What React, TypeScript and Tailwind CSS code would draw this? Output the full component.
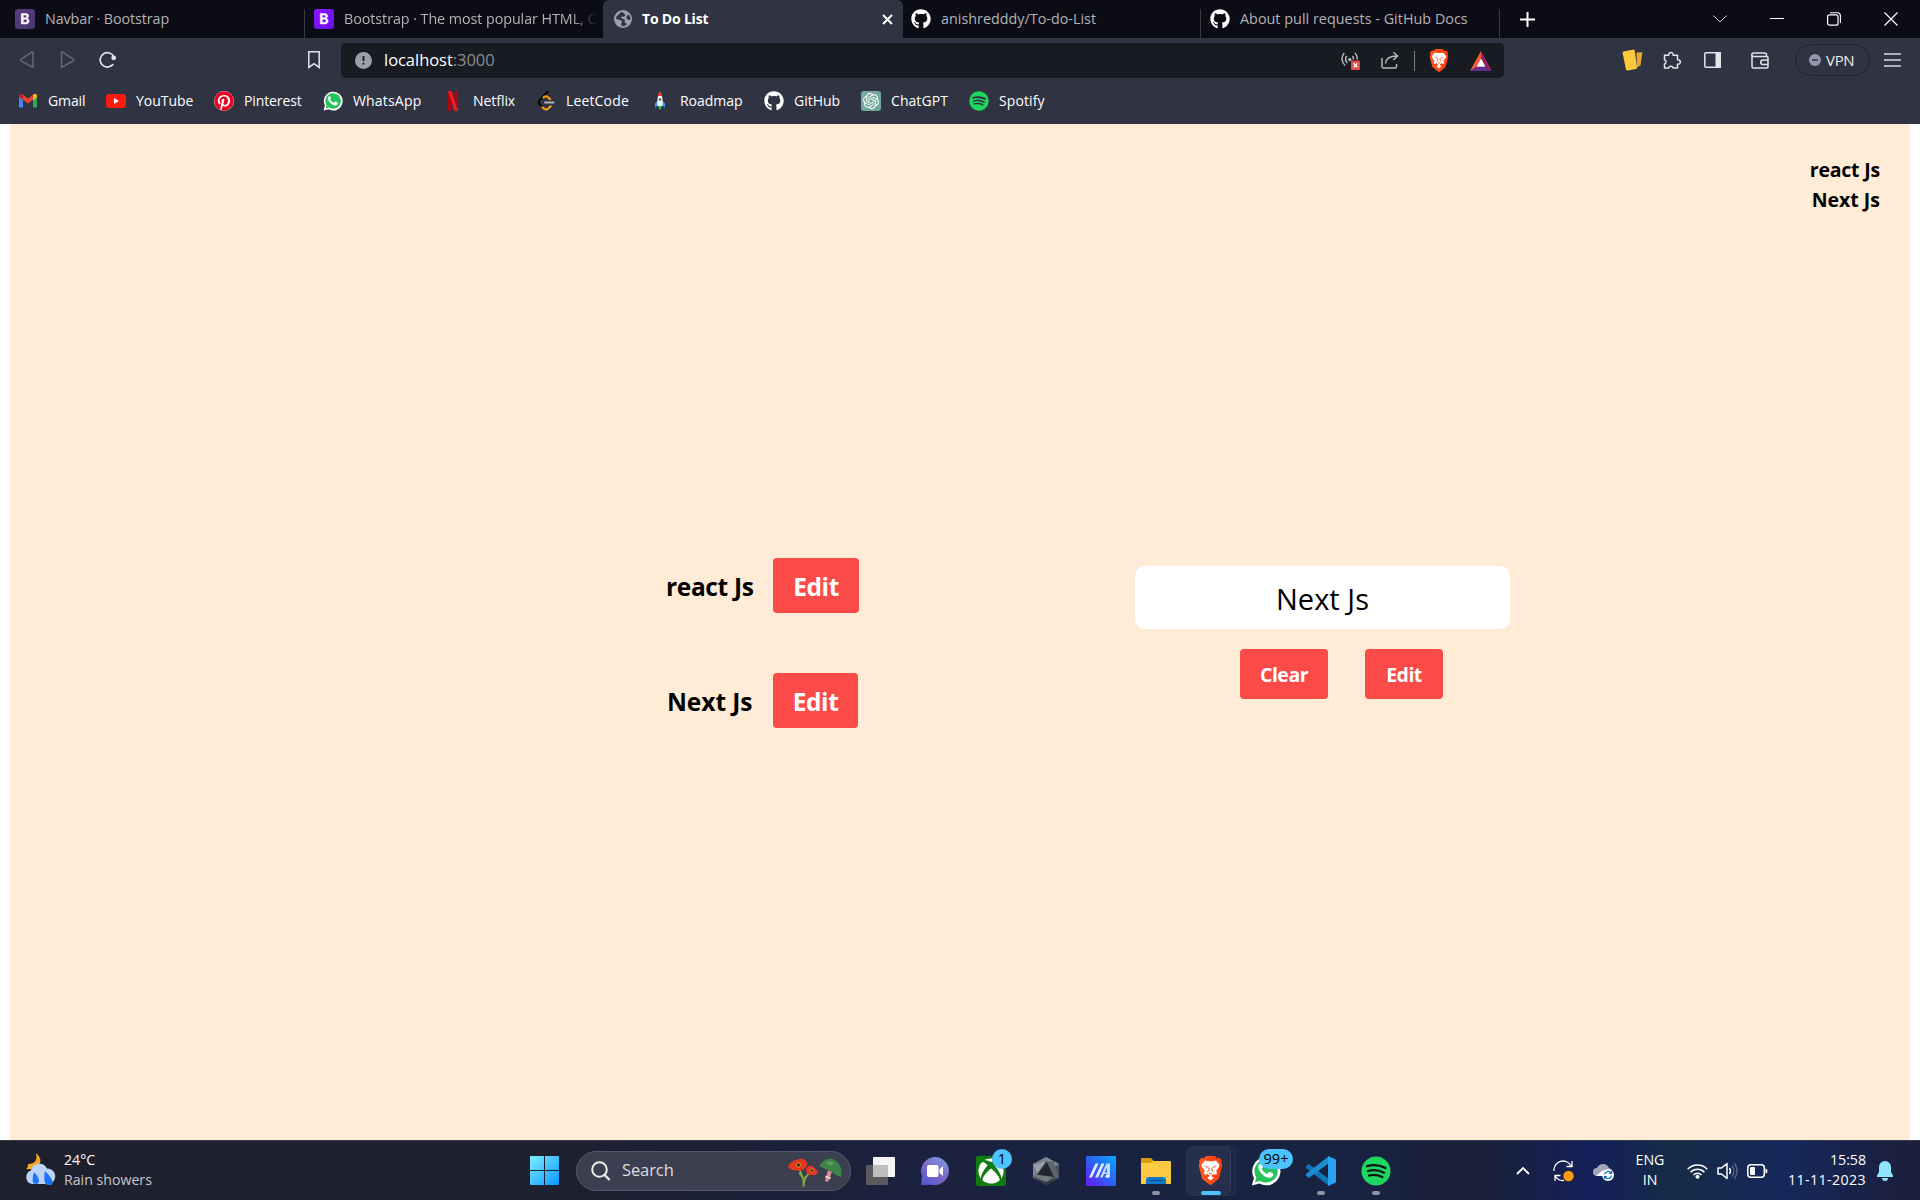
import React from 'react';
import { FaGithub, FaSpotify, FaPinterest, FaXbox } from 'react-icons/fa';
import { SiOpenai } from 'react-icons/si';

type SvgProps = { className?: string };

function Bootstrap({ from, to, id }: { from: string; to: string; id: string }) {
  return (
    <svg className="h-5 w-5 shrink-0" viewBox="0 0 20 20">
      <defs>
        <linearGradient id={id} x1="0" y1="0" x2="1" y2="1">
          <stop offset="0" stopColor={from} />
          <stop offset="1" stopColor={to} />
        </linearGradient>
      </defs>
      <rect width="20" height="20" rx="3" fill={`url(#${id})`} />
      <path d="M6.3 4.5h4.4c1.8 0 2.9 1 2.9 2.6 0 1.1-.7 2-1.7 2.3 1.3.2 2.2 1.200 2.2 2.600 0 1.900-1.300 3-3.500 3H6.300zM8.300 6.100v2.700h1.700c1.100 0 1.700-.500 1.700-1.400 0-.800-.600-1.300-1.600-1.300zM8.300 10.200v3.200h2c1.200 0 1.900-.600 1.900-1.600s-.700-1.600-2-1.600z" fill="#fff" stroke="#fff" strokeWidth=".5" fillRule="evenodd" />
    </svg>
  );
}

function Globe({ className }: SvgProps) {
  return (
    <svg className={className} viewBox="0 0 18 18">
      <circle cx="9" cy="9" r="9" fill="#9ba0ab" />
      <path d="M8 1.800 5.500 3.500 2.500 6.500 2 9l2.500.500 3 1.200.500 2-1 1.300 1 2.200c1.500.100 3.500-.500 4.800-1.600L10.500 12 11 10 8.500 8.500l-2-.500L8 6.500l2 .300L11.500 5 10 3.500zM13 5.500 12.300 8l1.700 1.800 2.200.200c.300-2-.200-4-1.200-5.200z" fill="#2f3342" />
    </svg>
  );
}

function WhatsApp({ className }: SvgProps) {
  return (
    <svg className={className} viewBox="0 0 24 24">
      <path d="M.700 23.500l1.600-6A11.300 11.300 0 1 1 6.700 22z" fill="#fff" />
      <path d="M3.200 21l1.100-4A9.300 9.300 0 1 1 7.300 19.900z" fill="#25c45a" />
      <path d="M8.600 6.700c-.300-.500-.700-.500-1-.500-.600 0-1.800.800-1.800 2.600s1.300 3.600 2.600 5.100c1.700 1.900 3.700 3.200 5.800 3.400 1.800.200 3.400-.600 3.600-2.300.100-.600.100-.900-.400-1.200l-2.200-1.100c-.400-.200-.700-.100-1 .300l-.800 1c-.300.300-.500.300-.900.100-1.700-.800-2.900-1.900-3.800-3.500-.200-.300-.100-.500.200-.9l.7-.9c.2-.3.2-.5 0-.9z" fill="#fff" />
    </svg>
  );
}

function BraveLion({ className, id }: { className: string; id: string }) {
  return (
    <svg className={`shrink-0 ${className}`} viewBox="0 0 25 29">
      <defs>
        <linearGradient id={id} x1="0" y1="0" x2="1" y2="0">
          <stop offset="0" stopColor="#ff5a1f" />
          <stop offset="1" stopColor="#ff3a0c" />
        </linearGradient>
      </defs>
      <path d="M8 0h9l2 2.200 2.500-.4L24 4.500l-.7 2 1 2.700-3 12q-.5 1.800-2 2.900L13.800 28.500q-1.300.8-2.600 0L5.700 24.100q-1.500-1.100-2-2.900l-3-12 1-2.700-.7-2L3.500 1.800l2.500.4z" fill={`url(#${id})`} />
      <path d="M7 4.600 10 5.200h5l3-.6 3.500 4.200-.6 2.500-2.700 3.400.9 2.300-.9 1.800-2.700-.7-2 1.400v.8l2.200 1.500-3.200 2.700-3.200-2.700 2.200-1.500v-.8l-2-1.400-2.700.7-.9-1.800.9-2.300-2.700-3.400-.6-2.500z" fill="#fff" />
      <path d="M6 9.800l4 .9-.6 1.300zM19 9.800l-4 .9.600 1.300z" fill="#ff4b16" />
      <path d="M10.900 11.500l.3 2.700-1.900 1.300M14.100 11.500l-.3 2.700 1.900 1.300M10.800 17l1.700.9 1.700-.9" fill="none" stroke="#ff4b16" strokeWidth="1" />
    </svg>
  );
}

function Separator() {
  return <div className="mt-[9px] h-[29px] w-px shrink-0 bg-[#3b3b42]" />;
}

function TabStrip() {
  const label = 'whitespace-nowrap text-[14.3px] leading-[38px] text-[#b3b3b6]';
  return (
    <div className="flex h-[38px] bg-[#0c0c16]">
      <div className="flex w-[304px] items-center pl-[15px]">
        <Bootstrap from="#563d7c" to="#4a3570" id="bs4" />
        <span className={`ml-[10px] ${label} tracking-[-0.08px]`}>Navbar · Bootstrap</span>
      </div>
      <Separator />
      <div className="flex w-[298px] items-center pl-[9px]">
        <Bootstrap from="#9013fe" to="#6610f2" id="bs5" />
        <div className="ml-[10px] w-[253px] overflow-hidden [mask-image:linear-gradient(to_right,black_90%,transparent)]">
          <span className={`${label} tracking-[-0.05px]`}>Bootstrap · The most popular HTML, CSS</span>
        </div>
      </div>
      <div className="flex w-[300px] items-center rounded-t-[6px] bg-[#2f3342] pl-[11px] pr-[10px]">
        <Globe className="h-[18px] w-[18px]" />
        <span className="ml-[10px] text-[14px] font-bold leading-[38px] tracking-[-0.2px] text-white">To Do List</span>
        <svg className="ml-auto h-[11px] w-[11px]" viewBox="0 0 11 11">
          <path d="M1 1l9 9M10 1l-9 9" stroke="#fff" strokeWidth="2" />
        </svg>
      </div>
      <div className="flex w-[297px] items-center pl-[8px]">
        <FaGithub className="h-5 w-5 text-white" />
        <span className={`ml-[10px] ${label} tracking-[0.03px]`}>anishredddy/To-do-List</span>
      </div>
      <Separator />
      <div className="flex w-[298px] items-center pl-[9px]">
        <FaGithub className="h-5 w-5 text-white" />
        <span className={`ml-[10px] ${label} tracking-[0.05px]`}>About pull requests - GitHub Docs</span>
      </div>
      <Separator />
      <div className="flex flex-1 items-center pl-[20px] pr-[22px]">
        <svg className="h-[15px] w-[15px]" viewBox="0 0 15 15">
          <path d="M7.500 0v15M0 7.500h15" stroke="#fff" strokeWidth="2" />
        </svg>
        <svg className="ml-auto h-[14px] w-[14px]" viewBox="0 0 14 14">
          <path d="M.500 3.500 7 10l6.500-6.500" stroke="#d0d0d3" fill="none" />
        </svg>
        <svg className="ml-[43px] h-[14px] w-[14px]" viewBox="0 0 14 14">
          <path d="M0 6.500h14" stroke="#fff" />
        </svg>
        <svg className="ml-[43px] h-[14px] w-[14px]" viewBox="0 0 14 14">
          <rect x=".6" y="2.800" width="10.400" height="10.400" rx="2" stroke="#fff" strokeWidth="1.200" fill="none" />
          <path d="M3 .700h7.500a3 3 0 0 1 2.900 3V11" stroke="#fff" strokeWidth="1.100" fill="none" />
        </svg>
        <svg className="ml-[43px] h-[14px] w-[14px]" viewBox="0 0 14 14">
          <path d="M.500.500l13 13M13.500.500l-13 13" stroke="#fff" strokeWidth="1.200" />
        </svg>
      </div>
    </div>
  );
}

function AddressRow() {
  return (
    <div className="flex h-[45px] items-center bg-[#2f3342] pb-px pl-[20px] pr-[18px]">
      <svg className="h-[18px] w-[15px]" viewBox="0 0 15 18">
        <path d="M13 1.600v14.800L1.200 9.800q-.900-.800 0-1.600L11.800 1.200q1.200-.500 1.200.600" fill="none" stroke="#666a78" strokeWidth="1.500" strokeLinejoin="round" />
      </svg>
      <svg className="ml-[25px] h-[18px] w-[15px]" viewBox="0 0 15 18">
        <path d="M1.500 1.600v14.800L13.300 9.800q.900-.800 0-1.600L2.700 1.200q-1.200-.500-1.200.600" fill="none" stroke="#666a78" strokeWidth="1.500" strokeLinejoin="round" />
      </svg>
      <svg className="ml-[24px] h-[18px] w-[18px]" viewBox="0 0 18 18">
        <path d="M13.800 13.600A7.200 7.200 0 1 1 15 6" fill="none" stroke="#e4e5e9" strokeWidth="1.700" strokeLinecap="round" />
        <circle cx="14.700" cy="6.800" r="2.400" fill="#e4e5e9" />
      </svg>
      <svg className="ml-[191px] h-[18px] w-[12px]" viewBox="0 0 12 18">
        <path d="M.800.800h10.400v15.600L6 12.600.800 16.400z" fill="none" stroke="#e4e5e9" strokeWidth="1.500" />
      </svg>
      <div className="ml-[21px] mt-px flex h-[35px] w-[1163px] items-center rounded-[5px] bg-[#191b22] pl-[14px] pr-[12px]">
        <svg className="h-[17px] w-[17px]" viewBox="0 0 17 17">
          <circle cx="8.500" cy="8.500" r="8.500" fill="#9a9fac" />
          <path d="M8.500 4v5M8.500 10.800v1.800" stroke="#191b22" strokeWidth="1.900" />
        </svg>
        <span className="ml-[12px] text-[16.500px] tracking-[-0.04px] text-white">
          localhost<span className="text-[#898c94]">:3000</span>
        </span>
        <svg className="mb-px ml-auto h-5 w-5" viewBox="0 0 20 20">
          <g fill="none" stroke="#b7b8bd" strokeWidth="1.500">
            <path d="M4.300 15.500a8.500 8.500 0 0 1-1-12.500M6.500 13a4.800 4.800 0 0 1-.700-7M14 3a8.500 8.500 0 0 1 2.300 6.500M11.500 6a4.800 4.800 0 0 1 1 3.500" />
          </g>
          <circle cx="8.800" cy="9.600" r="1.700" fill="#b7b8bd" />
          <rect x="10" y="10.500" width="9" height="9.500" rx="1" fill="#e04b43" />
          <path d="M12.600 13.200l3.800 4M16.400 13.200l-3.800 4" stroke="#fff" strokeWidth="1.400" />
        </svg>
        <svg className="mb-[2px] ml-[20px] h-[18px] w-[18px]" viewBox="0 0 18 18">
          <path d="M1 7v8.500Q1 17 2.500 17H14q1.500 0 1.500-1.500V13M4.500 12.500c.500-5 3.500-7.500 11-7.500M12.300 1.200 16.500 5l-4.200 4" fill="none" stroke="#b7b8bd" strokeWidth="1.500" />
        </svg>
        <div className="ml-[15px] h-5 w-px bg-[#7c7e84]" />
        <BraveLion className="ml-[14px] h-[23px] w-[20px]" id="brave-sm" />
        <svg className="ml-[21px] h-5 w-[22px]" viewBox="0 0 22 20">
          <path d="M11 0 0 20l6.500-4L11 7z" fill="#fb5c33" />
          <path d="M11 0l11 20-6.500-4L11 7z" fill="#9e1f63" />
          <path d="M0 20h22l-6.500-4h-9z" fill="#662d91" />
          <path d="M11 7.200 6.600 15.800h8.800z" fill="#fff" />
        </svg>
      </div>
      <svg className="ml-[118px] h-[22px] w-[21px]" viewBox="0 0 21 22">
        <path d="M14.500 3.500 20.500 3.200 18.500 16.500 15 18.500z" fill="#e5a82b" />
        <path d="M1.500 2.500 11.500.500q1 0 1.200 1L15 18.500q0 1.200-1 1.400L5.500 21.500q-1.200.100-1.500-1L.600 4q-.100-1.200.900-1.500z" fill="#ffc83d" />
      </svg>
      <svg className="ml-[20px] h-[18px] w-[18px]" viewBox="0 0 18 18">
        <path d="M1.500 4.300h4.200a2.300 2.300 0 1 1 4.500 0h4.300v4.400a2.300 2.300 0 1 1 0 4.500V17h-4.300a2.300 2.300 0 0 0-4.500 0H1.500v-4a2.300 2.300 0 0 0 0-4.300z" fill="none" stroke="#e4e5e9" strokeWidth="1.500" strokeLinejoin="round" />
      </svg>
      <svg className="ml-[23px] h-4 w-[17px]" viewBox="0 0 17 16">
        <rect x=".8" y=".8" width="15.400" height="14.400" rx="1" fill="none" stroke="#e4e5e9" strokeWidth="1.500" />
        <path d="M11.500 0H17v16h-5.500z" fill="#e4e5e9" />
      </svg>
      <svg className="ml-[30px] h-[17px] w-[18px]" viewBox="0 0 18 17">
        <path d="M15.500 4.500V2.600A1.500 1.500 0 0 0 14 1H2.500a1.600 1.600 0 0 0 0 3.500H16A1.200 1.200 0 0 1 17 5.700v9.100A1.200 1.200 0 0 1 16 16H2.500A1.500 1.500 0 0 1 1 14.500V2.500M17 8h-5a2.300 2.300 0 0 0 0 4.600h5z" fill="none" stroke="#e4e5e9" strokeWidth="1.500" />
      </svg>
      <div className="ml-[26px] flex h-[32px] w-[75px] items-center rounded-full border border-[#232633] pl-[13px]">
        <svg className="h-[12px] w-[12px] shrink-0" viewBox="0 0 12 12">
          <circle cx="6" cy="6" r="6" fill="#9297ab" />
          <path d="M3 6h6" stroke="#2f3342" strokeWidth="1.500" />
        </svg>
        <span className="ml-[5px] text-[15px] tracking-[-0.3px] text-[#ececf0]">VPN</span>
      </div>
      <svg className="ml-[14px] h-[14px] w-[17px]" viewBox="0 0 17 14">
        <path d="M0 1h17M0 7h17M0 13h17" stroke="#dcdde2" strokeWidth="1.500" />
      </svg>
    </div>
  );
}

function Bookmarks() {
  const text = 'text-[14px] text-white whitespace-nowrap tracking-[-0.02px]';
  const item = 'flex shrink-0 items-center gap-[10px]';
  return (
    <div className="flex h-[41px] items-center bg-[#2f3342] pb-[6px] pl-[18px]">
      <div className={`${item} w-[88px]`}>
        <svg className="h-[15px] w-5" viewBox="0 0 20 15">
          <path d="M1 3v10.500a1 1 0 0 0 1 1h3V6z" fill="#4285f4" />
          <path d="M15 6v8.500h3a1 1 0 0 0 1-1V3z" fill="#34a853" />
          <path d="M1 3q0-2.500 2.500-2L5 2v5L1 4z" fill="#c5221f" />
          <path d="M5 1.800 10 5.600l5-3.800v5L10 10.600 5 6.800z" fill="#ea4335" />
          <path d="M15 1.800q4-2.600 4 1.400v1L15 7.200z" fill="#fbbc04" />
        </svg>
        <span className="whitespace-nowrap text-[14px] tracking-[-0.1px] text-white">Gmail</span>
      </div>
      <div className={`${item} w-[108px]`}>
        <svg className="h-[14px] w-5" viewBox="0 0 20 14">
          <rect width="20" height="14" rx="3.500" fill="#ff1a0e" />
          <path d="M8 4v6l5-3z" fill="#fff" />
        </svg>
        <span className={text}>YouTube</span>
      </div>
      <div className={`${item} w-[109px]`}>
        <div className="grid h-5 w-5 place-items-center rounded-full bg-white">
          <FaPinterest className="h-5 w-5 text-[#e60023]" />
        </div>
        <span className="whitespace-nowrap text-[14px] tracking-[-0.12px] text-white">Pinterest</span>
      </div>
      <div className={`${item} w-[120px]`}>
        <WhatsApp className="h-5 w-5" />
        <span className="whitespace-nowrap text-[14px] tracking-[0.18px] text-white">WhatsApp</span>
      </div>
      <div className={`${item} w-[93px]`}>
        <svg className="h-5 w-5" viewBox="0 0 20 20">
          <path d="M5 0h3.500v20L5 20z" fill="#b1060f" />
          <path d="M11.500 0H15v20h-3.500z" fill="#b1060f" />
          <path d="M5 0h3.500L15 20h-3.500z" fill="#ee1c25" />
        </svg>
        <span className="whitespace-nowrap text-[14px] tracking-[-0.05px] text-white">Netflix</span>
      </div>
      <div className={`${item} w-[114px]`}>
        <svg className="h-5 w-5" viewBox="0 0 20 20" fill="none" strokeWidth="2" strokeLinecap="round">
          <path d="M11.500 1 4 8.700q-2.500 2.300 0 4.800l2.500 2.500" stroke="#080808" />
          <path d="M7.500 6.500q2-2.300 4.500-.300l2.200 2M6.500 16.200l1.600 1.500q2.200 1.600 4.200-.200l2.400-2.300" stroke="#ffa116" />
          <path d="M9 11.600h8.500" stroke="#b3b3b3" />
        </svg>
        <span className="whitespace-nowrap text-[14px] tracking-[0.15px] text-white">LeetCode</span>
      </div>
      <div className={`${item} w-[114px]`}>
        <svg className="h-5 w-5" viewBox="0 0 20 20">
          <path d="M7.500 9.500 5 12.500v4l3-2zM12.500 9.500l2.500 3v4l-3-2z" fill="#3b9df0" />
          <path d="M8 15h4l-2 4.500z" fill="#23c44a" />
          <path d="M10 1q3.500 5 2.500 14h-5Q6.500 6 10 1z" fill="#f2f2f2" />
          <path d="M10 .500q1.800 2 2.300 4.500H7.700Q8.200 2.500 10 .500z" fill="#e63a2e" />
          <circle cx="10" cy="8.500" r="1.200" fill="#556" />
        </svg>
        <span className={text}>Roadmap</span>
      </div>
      <div className={`${item} w-[97px]`}>
        <FaGithub className="h-5 w-5 text-white" />
        <span className={text}>GitHub</span>
      </div>
      <div className={`${item} w-[108px]`}>
        <div className="grid h-5 w-5 place-items-center rounded-[3px] bg-[#74aa9c]">
          <SiOpenai className="h-4 w-4 text-white" />
        </div>
        <span className="whitespace-nowrap text-[14px] tracking-[0.06px] text-white">ChatGPT</span>
      </div>
      <div className={item}>
        <FaSpotify className="h-5 w-5 text-[#1ed760]" />
        <span className="whitespace-nowrap text-[14px] tracking-[0.1px] text-white">Spotify</span>
      </div>
    </div>
  );
}

function Page() {
  const big = 'flex h-[55px] items-center justify-center rounded-[4px] bg-[#fb4b48] pt-[3px] text-[24.500px] font-bold tracking-[-0.4px] text-white';
  const small = 'flex h-[50px] items-center justify-center rounded-[4px] bg-[#fb4b48] pt-[2px] text-[19.500px] font-bold tracking-[-0.5px] text-white';
  return (
    <div className="flex h-[1016px] bg-white px-[10px] text-black">
      <div className="flex w-full bg-[#ffecd6]">
        <div className="ml-[656px] mt-[434px] flex flex-col gap-[60px]">
          <div className="flex items-center">
            <span className="w-[107px] whitespace-nowrap pt-[4px] text-[24.500px] font-bold tracking-[-0.35px]">react Js</span>
            <button className={`${big} w-[86px]`}>Edit</button>
          </div>
          <div className="flex items-center">
            <span className="w-[107px] whitespace-nowrap pl-px pt-[4px] text-[24.500px] font-bold tracking-[-0.05px]">Next Js</span>
            <button className={`${big} w-[85px]`}>Edit</button>
          </div>
        </div>
        <div className="ml-[276px] mt-[442px] flex w-[375px] flex-col">
          <div className="flex h-[63px] items-center justify-center rounded-[10px] bg-white pt-[3px] text-[29px] tracking-[0.05px]">Next Js</div>
          <div className="mt-[20px] flex pl-[105px]">
            <button className={`${small} w-[88px]`}>Clear</button>
            <button className={`${small} ml-[37px] w-[78px]`}>Edit</button>
          </div>
        </div>
        <div className="ml-auto mr-[30px] mt-[31px] text-right text-[19.500px] font-bold leading-[30px]">
          <p className="tracking-[-0.2px]">react Js</p>
          <p className="tracking-[0px]">Next Js</p>
        </div>
      </div>
    </div>
  );
}

function Weather() {
  return (
    <svg className="h-[32px] w-[32px]" viewBox="0 0 32 32">
      <path d="M12 0q7 6 3 12-4 5-13 4 2-1 2-5 6 0 8-4 1-3 0-7z" fill="#f6a822" />
      <path d="M8 31a7 7 0 0 1-1-13.500 8.500 8.500 0 0 1 16-2A7.500 7.500 0 0 1 24 31z" fill="#bcd3f8" />
      <path d="M10 19q5.500 6 5 9.500T9.500 30.500q-2-3 .5-11.500zM21 18q8 8 7.500 12T22 31.500q-3-4-1-13.500z" fill="#1a74f5" />
    </svg>
  );
}

function Indicator() {
  return <div className="absolute -bottom-[9px] left-[11px] h-1 w-2 rounded-full bg-[#9093a4]" />;
}

function Taskbar() {
  return (
    <div className="flex h-[60px] items-center border-t border-[#33384a] bg-[linear-gradient(90deg,#1e202e_0%,#1e202f_29%,#1a2240_50%,#182242_70%,#1a2137_77%,#14205a_83%,#162b46_87%,#15275a_93%,#1c1f3a_100%)] text-[14.200px] text-white">
      <div className="ml-[24px] w-8 pb-[4px]"><Weather /></div>
      <div className="ml-[8px] w-[466px] pb-[2px] leading-5 tracking-[-0.02px]">
        <p>24°C</p>
        <p className="text-[#c7c8cf]">Rain showers</p>
      </div>
      <svg className="h-[29px] w-[29px]" viewBox="0 0 29 29">
        <defs>
          <linearGradient id="win" x1="0" y1="0" x2="1" y2="1">
            <stop offset="0" stopColor="#7cf0ff" />
            <stop offset="1" stopColor="#0c95ff" />
          </linearGradient>
        </defs>
        <path d="M1 0h13v14H0V1q0-1 1-1zM15 0h13q1 0 1 1v13H15zM0 15h14v14H1q-1 0-1-1zM15 15h14v13q0 1-1 1H15z" fill="url(#win)" />
      </svg>
      <div className="ml-[17px] flex h-10 w-[275px] items-center rounded-full border border-[#55586c] bg-[#3c3f50] pl-[14px]">
        <svg className="h-5 w-[19px]" viewBox="0 0 19 20">
          <circle cx="8.500" cy="8.500" r="7.300" fill="none" stroke="#eee" strokeWidth="2" />
          <path d="M13.500 13.800 17.800 18.300" stroke="#eee" strokeWidth="2.300" strokeLinecap="round" />
        </svg>
        <span className="ml-[12px] w-[53px] text-[16.500px] tracking-[-0.1px] text-[#dcdde1]">Search</span>
        <svg className="ml-[113px] mt-[4px] h-[30px] w-[30px]" viewBox="0 0 30 30">
          <path d="M11 11q5 8 4.500 18M23 14q-7 4-7.500 15M15 21q-2-5-4-6M16 20q4-2 5-5" fill="none" stroke="#7cb342" strokeWidth="1.500" />
          <path d="M0 8Q3 3 8 2q7-3 10 1 3 4-1 7-4 5-9 2-6 1-8-4z" fill="#e4391f" />
          <path d="M18 11q2-4 6-3 3 2 6 6-2 4-6 3-6 0-6-6z" fill="#e4391f" />
          <circle cx="10.500" cy="7" r="2" fill="#3a1a10" stroke="#e3b33c" strokeWidth=".8" />
          <circle cx="24" cy="12.500" r="1.600" fill="#3a1a10" stroke="#e3b33c" strokeWidth=".6" />
        </svg>
        <svg className="ml-[1px] h-[25px] w-[23px]" viewBox="0 0 23 25">
          <path d="M9 12l4 2-4 10-3-1z" fill="#d98a98" />
          <path d="M6.500 18.500l5 2" stroke="#f7c4d0" strokeWidth="2" />
          <path d="M0 8Q7-2 16 2q8 6 6 17-2-1-3-1-9-6-19-10z" fill="#3f8548" />
          <path d="M6 5q5-3 9 0l-3 3z" fill="#5a9d5c" />
        </svg>
      </div>
      <svg className="ml-[15px] h-7 w-[29px]" viewBox="0 0 29 28">
        <rect y="8" width="22" height="20" rx="1" fill="#5a5a5e" />
        <rect x="7" width="22" height="20" rx="1" fill="#f5f5f5" />
        <path d="M7 8h15v12H7z" fill="#bebebe" />
      </svg>
      <svg className="ml-[26px] h-7 w-7" viewBox="0 0 28 28">
        <defs>
          <linearGradient id="chat" x1="0.800" y1="0" x2="0.200" y2="1">
            <stop offset="0" stopColor="#7b9be6" />
            <stop offset=".5" stopColor="#8068c4" />
            <stop offset="1" stopColor="#5558cf" />
          </linearGradient>
        </defs>
        <path d="M14 0a14 14 0 1 1-3 27.700L1 28q-1 0-.800-1L1 19A14 14 0 0 1 14 0z" fill="url(#chat)" />
        <rect x="6" y="8" width="11.500" height="12" rx="2" fill="#fff" />
        <path d="M18.500 12.500 22 9v10l-3.500-3z" fill="#fff" />
      </svg>
      <div className="relative ml-[27px] grid h-[30px] w-[30px] place-items-center rounded-[2px] bg-[#107c10]">
        <FaXbox className="h-[26px] w-[26px] text-white" />
        <div className="absolute -top-[7px] left-4 h-5 w-5 rounded-full bg-[#4cc2ff] text-center text-[14.500px] leading-5 text-black">1</div>
      </div>
      <svg className="ml-[27px] h-7 w-[26px]" viewBox="0 0 26 28">
        <path d="M13 0l13 7v14l-13 7L0 21V7z" fill="#4b525a" />
        <path d="M13 0l13 7-5 3L13 3.500z" fill="#808993" />
        <path d="M0 21V7L13 0v4L4 17z" fill="#7b848d" />
        <path d="M0 7l4.500 9L13 4 2.500 8z" fill="#98a0a9" />
        <path d="M14 5l7 15-17-2z" fill="#23272d" />
        <path d="M14 5l6.500-1L26 21l-5-1z" fill="#5c646d" />
        <path d="M3 17.500l17 2.500-7 5.500-11-5.500z" fill="#72797f" />
        <path d="M1 21l12 4 12-4-12 7z" fill="#34393f" />
      </svg>
      <svg className="ml-[27px] h-[30px] w-[30px]" viewBox="0 0 30 30">
        <defs>
          <linearGradient id="asus" x1="0" y1="1" x2="1" y2="0">
            <stop offset="0" stopColor="#6a18f5" />
            <stop offset=".5" stopColor="#2b62f5" />
            <stop offset="1" stopColor="#04aaff" />
          </linearGradient>
        </defs>
        <path d="M0 0h30v30H0z" fill="url(#asus)" />
        <path d="M3 21.500 9.500 7.500h3L6 21.500zM9 21.500 15.500 7.500h3L12 21.500z" fill="#dfe8ff" />
        <path d="M14 21.500 20.500 7.500h3.500v14h-3v-3.500h-3l-1.500 3.500zM21 11.500l-2.500 5H21z" fill="#c9dcff" fillRule="evenodd" />
        <circle cx="21" cy="20.300" r="1.500" fill="#fff" />
      </svg>
      <div className="relative ml-[25px] h-[26px] w-[30px]">
        <svg className="h-[26px] w-[30px]" viewBox="0 0 30 26">
          <path d="M0 1q0-1 1-1h9l3 3h15v6H0z" fill="#dd9b08" />
          <path d="M0 5h9l4-2h16q1 0 1 1v21q0 1-1 1H1q-1 0-1-1z" fill="#fdcb43" />
          <path d="M5 26v-4q0-3 3-3h14q3 0 3 3v4z" fill="#1177c8" />
          <path d="M8 22.500h14" stroke="#0a4f94" strokeWidth="1.200" />
        </svg>
        <div className="absolute -bottom-[11px] left-[11px] h-1 w-2 rounded-full bg-[#9093a4]" />
      </div>
      <div className="ml-[15px] flex h-[50px] w-[50px] rounded-[6px] border border-[#2a3350] bg-[#1c2743]">
        <div className="relative flex h-[48px] w-[44px] items-center rounded-[6px] border-r border-[#343d59] bg-[#262f4b] pl-[11px]">
          <BraveLion className="h-[29px] w-[25px]" id="brave-lg" />
          <div className="absolute bottom-0 left-[14px] h-1 w-5 rounded-full bg-[#4cc2ff]" />
        </div>
      </div>
      <div className="relative ml-[15px] h-[30px] w-[30px]">
        <WhatsApp className="h-[30px] w-[30px]" />
        <div className="absolute -top-[7px] left-[8px] h-5 w-[34px] rounded-full bg-[#4cc2ff] text-center text-[14.500px] leading-5 text-black">99+</div>
      </div>
      <div className="relative ml-[25px] h-[30px] w-[30px]">
        <svg className="h-[30px] w-[30px]" viewBox="0 0 30 30">
          <path d="M0 10.500l2-2q.800-.600 1.500 0L23 23v7L.300 12.200q-.900-.800-.300-1.700z" fill="#1173b8" />
          <path d="M0 19.500l2 2q.800.600 1.500 0L23 7V0L.300 17.800q-.900.800-.300 1.700z" fill="#1f8ad0" />
          <path d="M22 0l7 3q1 .500 1 1.500v21q0 1-1 1.500l-7 3z" fill="#29a3ef" />
        </svg>
        <Indicator />
      </div>
      <div className="relative ml-[25px] h-[30px] w-[30px]">
        <svg className="h-[30px] w-[30px]" viewBox="0 0 30 30">
          <circle cx="15" cy="15" r="14.500" fill="#1ed760" />
          <path d="M6 10.200q10-2.700 18.500 1.800M7 15q8.500-2.300 16 1.700M8 19.500q7-1.800 13.300 1.600" fill="none" stroke="#0b1512" strokeWidth="2.300" strokeLinecap="round" />
        </svg>
        <Indicator />
      </div>
      <svg className="ml-[125px] h-[9px] w-[14px]" viewBox="0 0 14 9">
        <path d="M1 8l6-6 6 6" fill="none" stroke="#fff" strokeWidth="1.800" />
      </svg>
      <svg className="ml-[23px] h-[22px] w-[21px]" viewBox="0 0 21 22">
        <path d="M1 11A9 9 0 0 1 18 6M19 1v5.500h-5.500M11 20.500a9 9 0 0 1-9-5M2 21v-5.500h5.500" fill="none" stroke="#fff" strokeWidth="1.300" />
        <circle cx="15.500" cy="16" r="5.200" fill="#ff9a0a" />
      </svg>
      <svg className="ml-[19px] mt-[2px] h-[20px] w-[21px]" viewBox="0 0 21 20">
        <path d="M4 14a4 4 0 0 1 0-8 6.500 6.500 0 0 1 12 0q4 1 3 5z" fill="#a1a5b9" />
        <path d="M3 14l7-6 4 6z" fill="#fff" />
        <circle cx="15" cy="13" r="6" fill="#fff" />
        <path d="M11.500 12.500a3.600 3.600 0 0 1 6.500-1.500M18.500 9v2.300h-2.400M18.500 13.500a3.600 3.600 0 0 1-6.500 1.500M11.600 17v-2.300H14" fill="none" stroke="#1673c6" strokeWidth="1.300" />
      </svg>
      <div className="ml-[20px] w-[32px] pb-[2px] text-center leading-5">
        <p>ENG</p>
        <p>IN</p>
      </div>
      <svg className="ml-[21px] h-[16px] w-[21px]" viewBox="0 0 21 16">
        <path d="M.700 6.200a13.700 13.700 0 0 1 19.600 0M3.600 9.200a9.700 9.700 0 0 1 13.800 0M6.500 12a5.600 5.600 0 0 1 8 0" fill="none" stroke="#fff" strokeWidth="1.600" />
        <circle cx="10.500" cy="13.800" r="2" fill="#fff" />
      </svg>
      <svg className="ml-[9px] h-[18px] w-[21px]" viewBox="0 0 21 18">
        <path d="M1 6h3.500L10 1.500v15L4.500 12H1z" fill="none" stroke="#fff" strokeWidth="1.500" strokeLinejoin="round" />
        <path d="M12.500 6q2 3 0 6" fill="none" stroke="#fff" strokeWidth="1.400" />
        <path d="M15 3.500q4 5.500 0 11M17.500 1.500q5 7.500 0 15" fill="none" stroke="#5b6486" strokeWidth="1.400" />
      </svg>
      <svg className="ml-[9px] h-[14px] w-[21px]" viewBox="0 0 21 14">
        <rect x=".8" y=".8" width="16.500" height="12.400" rx="3" fill="none" stroke="#fff" strokeWidth="1.500" />
        <rect x="3" y="3" width="5" height="8" rx="1" fill="#fff" />
        <path d="M18.500 4.500q2 0 2 2.500t-2 2.500z" fill="#fff" />
      </svg>
      <div className="ml-auto w-[90px] whitespace-nowrap pb-[2px] text-right leading-5">
        <p className="tracking-[-0.05px]">15:58</p>
        <p className="tracking-[0.4px]">11-11-2023</p>
      </div>
      <svg className="ml-[11px] mr-[27px] h-5 w-4" viewBox="0 0 16 20">
        <path d="M8 0a6 6 0 0 1 6 6v5l2 3.500V16H0v-1.500L2 11V6a6 6 0 0 1 6-6zM5 17h6a3 3 0 0 1-6 0z" fill="#8fe6ff" />
      </svg>
    </div>
  );
}

export default function App() {
  return (
    <div className="flex h-[1200px] w-[1920px] flex-col overflow-hidden font-['Open_Sans','Noto_Sans',sans-serif]">
      <TabStrip />
      <div className="flex h-[86px] flex-col bg-[#2f3342]">
        <AddressRow />
        <Bookmarks />
      </div>
      <Page />
      <Taskbar />
    </div>
  );
}
